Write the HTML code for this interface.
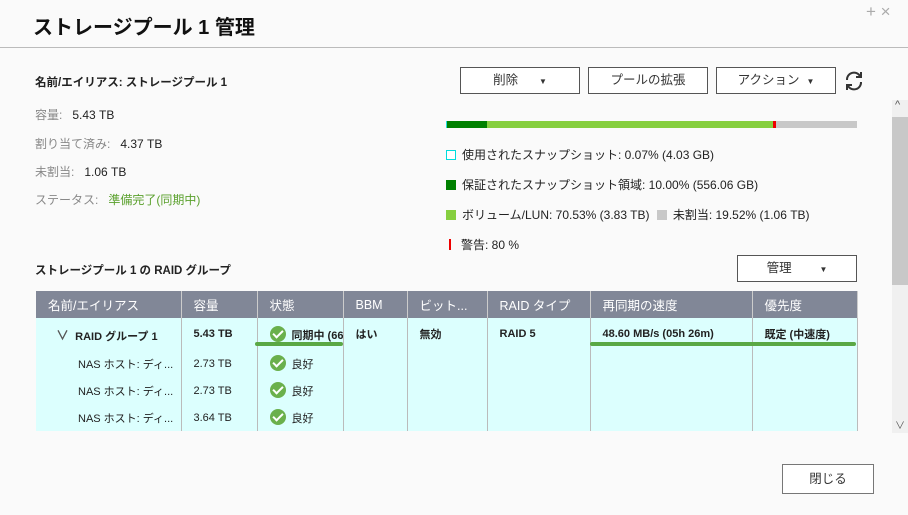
<!DOCTYPE html>
<html><head><meta charset="utf-8"><style>
*{margin:0;padding:0;box-sizing:border-box}
body{width:908px;height:515px;background:#fafafa;font-family:"Liberation Sans","Noto Sans CJK JP",sans-serif;color:#222;position:relative;overflow:hidden;font-size:12px}
.a{position:absolute;white-space:nowrap}
.btn{position:absolute;border:1px solid #555;background:#fff;height:27px;font-size:12.5px;text-align:center;line-height:25px;color:#333}
.lbl{color:#888}
.sq{display:inline-block;width:10px;height:10px;vertical-align:-1px;margin-right:6px}
table{position:absolute;left:36px;top:291px;width:821px;border-collapse:collapse;table-layout:fixed}
th{background:#818797;color:#fff;font-weight:normal;text-align:left;height:27px;font-size:12.5px;padding-left:12px;border-right:1px solid #ccc}
td{background:#dcfffe;font-size:11px;padding-left:12px;border-right:1px solid #bbb;white-space:nowrap;overflow:hidden;vertical-align:middle}
.chk{display:inline-block;width:16px;height:16px;border-radius:50%;background:#6ab04c;vertical-align:-3px;margin-right:6px;position:relative}
.chk:after{content:"";position:absolute;left:5px;top:2px;width:4px;height:8px;border:solid #fff;border-width:0 2px 2px 0;transform:rotate(45deg)}
</style></head><body>
<div class="a" style="left:33px;top:11px;font-size:20px;font-weight:bold;color:#111">ストレージプール 1 管理</div>
<div class="a" style="left:866px;top:2px;font-size:17px;color:#aaa">+ ×</div>
<div class="a" style="left:0;top:47px;width:908px;height:1px;background:#bbb"></div>
<div class="a" style="left:35px;top:74px;font-weight:bold;font-size:11.5px">名前/エイリアス: ストレージプール 1</div>
<div class="a" style="left:35px;top:106px"><span class="lbl">容量:</span>&nbsp;&nbsp; 5.43 TB</div>
<div class="a" style="left:35px;top:135px"><span class="lbl">割り当て済み:</span>&nbsp;&nbsp; 4.37 TB</div>
<div class="a" style="left:35px;top:163px"><span class="lbl">未割当:</span>&nbsp;&nbsp; 1.06 TB</div>
<div class="a" style="left:35px;top:191px"><span class="lbl">ステータス:</span>&nbsp;&nbsp; <span style="color:#5aa02c">準備完了(同期中)</span></div>
<div class="btn" style="left:460px;top:67px;width:120px">削除 &nbsp;&nbsp;&nbsp;&nbsp;&nbsp;<span style="font-size:8px">▼</span></div>
<div class="btn" style="left:588px;top:67px;width:120px">プールの拡張</div>
<div class="btn" style="left:716px;top:67px;width:120px">アクション &nbsp;<span style="font-size:8px">▼</span></div>
<svg class="a" style="left:843px;top:69px" width="22" height="24" viewBox="0 0 22 24" fill="none" stroke="#333" stroke-width="2"><path d="M4 11 A7 7 0 0 1 17 7"/><path d="M18 3 L18 8 L13 8" /><path d="M18 13 A7 7 0 0 1 5 17"/><path d="M4 21 L4 16 L9 16"/></svg>
<div class="a" style="left:446px;top:121px;width:411px;height:7px;background:#c8c8c8"></div>
<div class="a" style="left:446px;top:121px;width:1px;height:7px;background:#2dd"></div>
<div class="a" style="left:447px;top:121px;width:40px;height:7px;background:#008000"></div>
<div class="a" style="left:487px;top:121px;width:286px;height:7px;background:#86cf3f"></div>
<div class="a" style="left:773px;top:121px;width:3px;height:7px;background:#e00"></div>
<div class="a" style="left:446px;top:146px"><span class="sq" style="border:1px solid #0dd;background:#fff"></span>使用されたスナップショット: 0.07% (4.03 GB)</div>
<div class="a" style="left:446px;top:176px"><span class="sq" style="background:#008000"></span>保証されたスナップショット領域: 10.00% (556.06 GB)</div>
<div class="a" style="left:446px;top:206px"><span class="sq" style="background:#86cf3f"></span>ボリューム/LUN: 70.53% (3.83 TB) <span class="sq" style="background:#c8c8c8;margin-left:4px"></span>未割当: 19.52% (1.06 TB)</div>
<div class="a" style="left:446px;top:236px"><span style="display:inline-block;width:2px;height:11px;background:#e00;margin:0 10px 0 3px;vertical-align:-1px"></span>警告: 80 %</div>
<div class="a" style="left:35px;top:262px;font-weight:bold;font-size:11.5px">ストレージプール 1 の RAID グループ</div>
<div class="btn" style="left:737px;top:255px;width:120px">管理 &nbsp;&nbsp;&nbsp;&nbsp;&nbsp;&nbsp;&nbsp;<span style="font-size:8px">▼</span></div>
<table>
<colgroup><col style="width:145px"><col style="width:76px"><col style="width:86px"><col style="width:64px"><col style="width:80px"><col style="width:103px"><col style="width:162px"><col style="width:105px"></colgroup>
<tr><th>名前/エイリアス</th><th>容量</th><th>状態</th><th>BBM</th><th>ビット...</th><th>RAID タイプ</th><th>再同期の速度</th><th>優先度</th></tr>
<tr style="font-weight:bold;height:32px"><td style="padding-left:20px"><span style="font-size:13px;color:#555">∨</span>&nbsp; RAID グループ 1</td><td>5.43 TB</td><td><span class="chk"></span>同期中 (66</td><td>はい</td><td>無効</td><td>RAID 5</td><td>48.60 MB/s (05h 26m)</td><td>既定 (中速度)</td></tr>
<tr style="height:27px"><td style="padding-left:42px">NAS ホスト: ディ...</td><td>2.73 TB</td><td><span class="chk"></span>良好</td><td></td><td></td><td></td><td></td><td></td></tr>
<tr style="height:27px"><td style="padding-left:42px">NAS ホスト: ディ...</td><td>2.73 TB</td><td><span class="chk"></span>良好</td><td></td><td></td><td></td><td></td><td></td></tr>
<tr style="height:27px"><td style="padding-left:42px">NAS ホスト: ディ...</td><td>3.64 TB</td><td><span class="chk"></span>良好</td><td></td><td></td><td></td><td></td><td></td></tr>
</table>
<div class="a" style="left:255px;top:342px;width:88px;height:4px;border-radius:2px;background:#5aa845"></div>
<div class="a" style="left:590px;top:342px;width:266px;height:4px;border-radius:2px;background:#5aa845"></div>
<div class="a" style="left:892px;top:100px;width:16px;height:333px;background:#f0f0f0"></div>
<div class="a" style="left:892px;top:117px;width:16px;height:168px;background:#c8c8c8"></div>
<div class="a" style="left:895px;top:99px;font-size:11px;color:#555">^</div>
<div class="a" style="left:895px;top:417px;font-size:10px;color:#555">∨</div>
<div class="btn" style="left:782px;top:464px;width:92px;height:30px;line-height:28px;border-color:#777">閉じる</div>
</body></html>
